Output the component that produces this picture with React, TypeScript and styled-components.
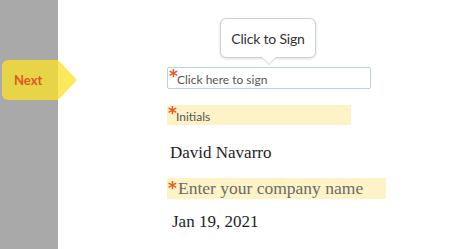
import styled, { createGlobalStyle } from "styled-components"

const GlobalStyle = createGlobalStyle`
  html, body {
    margin: 0;
    padding: 0;
    background: #fff;
  }
  body {
    width: 450px;
    height: 249px;
    overflow: hidden;
  }
`

const Page = styled.div`
  position: relative;
  display: flex;
  height: 249px;
`

const Sidebar = styled.div`
  width: 58px;
  flex: none;
  background: #a9a9a9;
`

const Main = styled.div`
  flex: 1;
  display: flex;
  flex-direction: column;
  align-items: flex-start;
  padding: 67px 0 0 109px;
`

const NextTag = styled.div`
  position: absolute;
  left: 2px;
  top: 60px;
  width: 56px;
  height: 40px;
  box-sizing: border-box;
  padding-left: 12px;
  display: flex;
  align-items: center;
  border-radius: 6px 0 0 6px;
  background: rgba(251, 225, 41, 0.77);
  color: #e2571f;
  font: bold 13px Lato, sans-serif;

  &::after {
    content: "";
    position: absolute;
    left: 56px;
    top: 0;
    border-top: 20px solid transparent;
    border-bottom: 20px solid transparent;
    border-left: 19px solid rgba(251, 225, 41, 0.77);
  }
`

const Field = styled.div<{ $w: number; $h: number; $mt?: number; $filled?: boolean }>`
  position: relative;
  box-sizing: border-box;
  width: ${(p) => p.$w}px;
  height: ${(p) => p.$h}px;
  margin-top: ${(p) => p.$mt ?? 0}px;
  display: flex;
  align-items: center;
  background: ${(p) => (p.$filled ? "#fdf3c6" : "#fff")};
  border: ${(p) => (p.$filled ? "none" : "1px solid #b9d0e8")};
  border-radius: ${(p) => (p.$filled ? 0 : 2)}px;
`

const Star = styled.span<{ $top: number; $size?: number }>`
  position: absolute;
  left: 1px;
  top: ${(p) => p.$top}px;
  color: #ea5a1e;
  font: bold ${(p) => p.$size ?? 17}px "DejaVu Sans", sans-serif;
  line-height: 1;
`

const Hint = styled.span<{ $pl: number; $pt?: number }>`
  padding-left: ${(p) => p.$pl}px;
  padding-top: ${(p) => p.$pt ?? 0}px;
  color: #555;
  font: 12px Lato, sans-serif;
`

const SerifHint = styled.span`
  padding-left: 11px;
  color: #6a6a6a;
  font: 17.5px "Liberation Serif", serif;
`

const Tooltip = styled.div`
  position: absolute;
  left: 52px;
  bottom: 30px;
  width: 96px;
  height: 40px;
  box-sizing: border-box;
  display: flex;
  align-items: center;
  justify-content: center;
  background: #fff;
  border: 1px solid #cfcfcf;
  border-radius: 6px;
  box-shadow: 0 1px 3px rgba(0, 0, 0, 0.12);
  color: #333;
  font: 14px Lato, sans-serif;
  letter-spacing: -0.2px;

  &::before,
  &::after {
    content: "";
    position: absolute;
    left: 40px;
    border-left: 8px solid transparent;
    border-right: 8px solid transparent;
  }
  &::before {
    bottom: -8px;
    border-top: 8px solid #cfcfcf;
  }
  &::after {
    bottom: -6.5px;
    border-top: 8px solid #fff;
  }
`

const Value = styled.div<{ $mt: number; $pl: number }>`
  margin-top: ${(p) => p.$mt}px;
  padding-left: ${(p) => p.$pl}px;
  color: #1e1e1e;
  font: 17px "Liberation Serif", serif;
  line-height: 20px;
`

export default function App() {
  return (
    <>
      <GlobalStyle />
      <Page>
        <Sidebar />
        <Main>
          <Field $w={204} $h={22}>
            <Tooltip>Click to Sign</Tooltip>
            <Star $top={0}>*</Star>
            <Hint $pl={9} $pt={3}>Click here to sign</Hint>
          </Field>
          <Field $w={184} $h={20} $mt={16} $filled>
            <Star $top={0}>*</Star>
            <Hint $pl={9} $pt={3}>Initials</Hint>
          </Field>
          <Value $mt={18} $pl={3}>David Navarro</Value>
          <Field $w={219} $h={21} $mt={15} $filled>
            <Star $top={2}>*</Star>
            <SerifHint>Enter your company name</SerifHint>
          </Field>
          <Value $mt={13} $pl={5}>Jan 19, 2021</Value>
        </Main>
        <NextTag>Next</NextTag>
      </Page>
    </>
  )
}
